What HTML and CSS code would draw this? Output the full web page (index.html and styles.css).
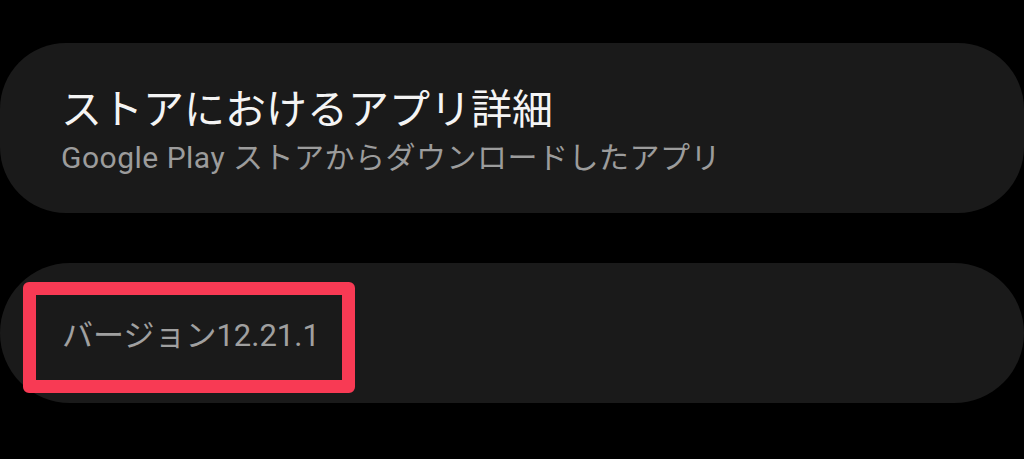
FILE: index.html
```html
<!DOCTYPE html>
<html lang="ja">
<head>
<meta charset="utf-8">
<link rel="stylesheet" href="styles.css">
</head>
<body>
<div class="page">
  <section class="card card-store">
    <div class="title">ストアにおけるアプリ詳細</div>
    <div class="subtitle">Google Play ストアからダウンロードしたアプリ</div>
  </section>
  <section class="card card-version">
    <div class="highlight">
      <span class="version">バージョン12.21.1</span>
    </div>
  </section>
</div>
</body>
</html>
```
FILE: styles.css
```css
html, body {
  margin: 0;
  padding: 0;
  background: #000;
}
body {
  width: 1024px;
  height: 459px;
  overflow: hidden;
  font-family: Roboto, "Noto Sans CJK JP", sans-serif;
}
.page {
  display: flex;
  flex-direction: column;
  padding-top: 43px;
  gap: 50px;
}
.card {
  background: #1a1a1a;
  box-sizing: border-box;
  width: 1024px;
}
.card-store {
  height: 170px;
  border-radius: 66px;
  padding-left: 61px;
  padding-top: 42px;
  display: flex;
  flex-direction: column;
}
.title {
  font-size: 41px;
  line-height: 50px;
  color: #f4f4f4;
}
.subtitle {
  font-size: 30px;
  line-height: 38px;
  letter-spacing: 0.5px;
  color: #9c9c9c;
  margin-top: 4px;
}
.card-version {
  height: 140px;
  border-radius: 70px;
  padding-top: 19px;
  padding-left: 23px;
}
.highlight {
  box-sizing: border-box;
  width: 332px;
  height: 111px;
  border: 13px solid #f83a54;
  border-radius: 6px;
  display: flex;
  align-items: center;
  padding-left: 26px;
  padding-bottom: 10px;
}
.version {
  font-size: 31px;
  color: #a0a0a0;
}
```
